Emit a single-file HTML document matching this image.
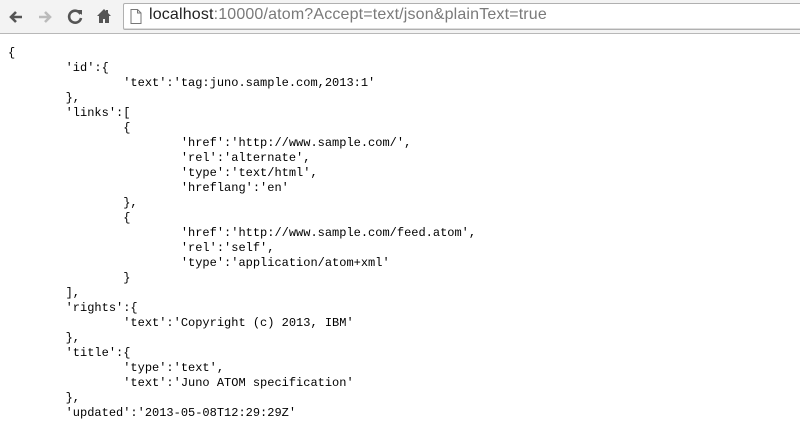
<!DOCTYPE html>
<html><head><meta charset="utf-8"><style>
html,body{margin:0;padding:0;background:#fff;width:800px;height:411px;overflow:hidden}
.bar{position:absolute;left:0;top:0;width:800px;height:33px;background:#f3f3f3;border-bottom:1px solid #b8b8b8}
.addr{position:absolute;left:123px;top:3px;width:690px;height:25px;background:#fff;border:1px solid #b0b0b0;border-radius:2px;box-shadow:inset 0 -1px 0 #ddd}
.url{position:absolute;left:25px;top:2px;font:16px "Liberation Sans",Arial,sans-serif;color:#7a7a7a;white-space:nowrap;letter-spacing:0.16px}
.url b{font-weight:normal;color:#222}
pre{position:absolute;left:8px;top:46px;margin:0;font:12px/15px "Liberation Mono",monospace;tab-size:8;-moz-tab-size:8;color:#000}
svg{position:absolute}
</style></head><body>
<div class="bar">
<svg style="left:8px;top:9px" width="16" height="16" viewBox="0 0 16 16"><path d="M14 8H4M8 3L3 8l5 5" stroke="#555" stroke-width="2.6" fill="none"/></svg>
<svg style="left:37px;top:9px" width="16" height="16" viewBox="0 0 16 16"><path d="M2 8h10M8 3l5 5-5 5" stroke="#bbb" stroke-width="2.6" fill="none"/></svg>
<svg style="left:67px;top:8px" width="17" height="17" viewBox="0 0 17 17"><path d="M13.5 6A6 6 0 1 0 14 10" stroke="#555" stroke-width="2.6" fill="none"/><path d="M10 2h5v5z" fill="#555"/></svg>
<svg style="left:96px;top:8px" width="16" height="16" viewBox="0 0 16 16"><path d="M8 1L1 8h2v7h4v-4h2v4h4V8h2L12 5V2h-2v1z" fill="#555"/></svg>
<div class="addr">
<svg style="left:6px;top:5px" width="12" height="15" viewBox="0 0 12 15"><path d="M1 .5h6.5l3.5 3.5v10.5H1z M7.5 .5V4H11" stroke="#777" fill="#fff"/></svg>
<div class="url"><b>localhost</b>:10000/atom?Accept=text/json&amp;plainText=true</div>
</div>
</div>
<pre>{
	'id':{
		'text':'tag:juno.sample.com,2013:1'
	},
	'links':[
		{
			'href':'http://www.sample.com/',
			'rel':'alternate',
			'type':'text/html',
			'hreflang':'en'
		},
		{
			'href':'http://www.sample.com/feed.atom',
			'rel':'self',
			'type':'application/atom+xml'
		}
	],
	'rights':{
		'text':'Copyright (c) 2013, IBM'
	},
	'title':{
		'type':'text',
		'text':'Juno ATOM specification'
	},
	'updated':'2013-05-08T12:29:29Z'
</pre>
</body></html>
